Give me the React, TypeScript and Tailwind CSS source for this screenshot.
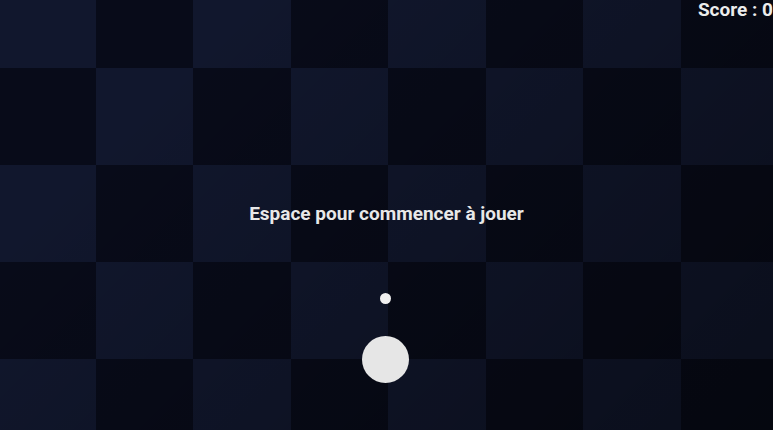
import React from "react";

export default function App() {
  const rows = Array.from({ length: 5 });
  const cols = Array.from({ length: 8 });
  return (
    <div
      className="relative w-[773px] h-[430px] overflow-hidden bg-[#090c1a]"
      style={{ fontFamily: "Roboto, 'Noto Sans', sans-serif" }}
    >
      <div className="-mt-[29px] -ml-[2px] grid grid-cols-[repeat(8,97.5px)] grid-rows-[repeat(5,97px)]">
        {rows.map((_, r) =>
          cols.map((_, c) => (
            <div
              key={`${r}-${c}`}
              className={(r + c) % 2 === 0 ? "bg-[#11172d]" : "bg-[#080b19]"}
            />
          ))
        )}
      </div>

      <div className="absolute inset-0 bg-[linear-gradient(135deg,rgba(0,0,0,0)_20%,rgba(0,0,0,0.4)_100%)]" />

      <div className="absolute top-[-1px] right-0 text-[19px] leading-[22px] font-bold text-[#ececec]">
        Score : 0
      </div>

      <div className="absolute left-0 right-0 top-[203px] flex justify-center">
        <span className="text-[19px] leading-[22px] font-bold text-[#e8e8e8]">
          Espace pour commencer à jouer
        </span>
      </div>

      <div className="absolute left-[380px] top-[293px] w-[11px] h-[11px] rounded-full bg-[#f0f0f0]" />
      <div className="absolute left-[362px] top-[336px] w-[47px] h-[47px] rounded-full bg-[#e6e6e6]" />
    </div>
  );
}
